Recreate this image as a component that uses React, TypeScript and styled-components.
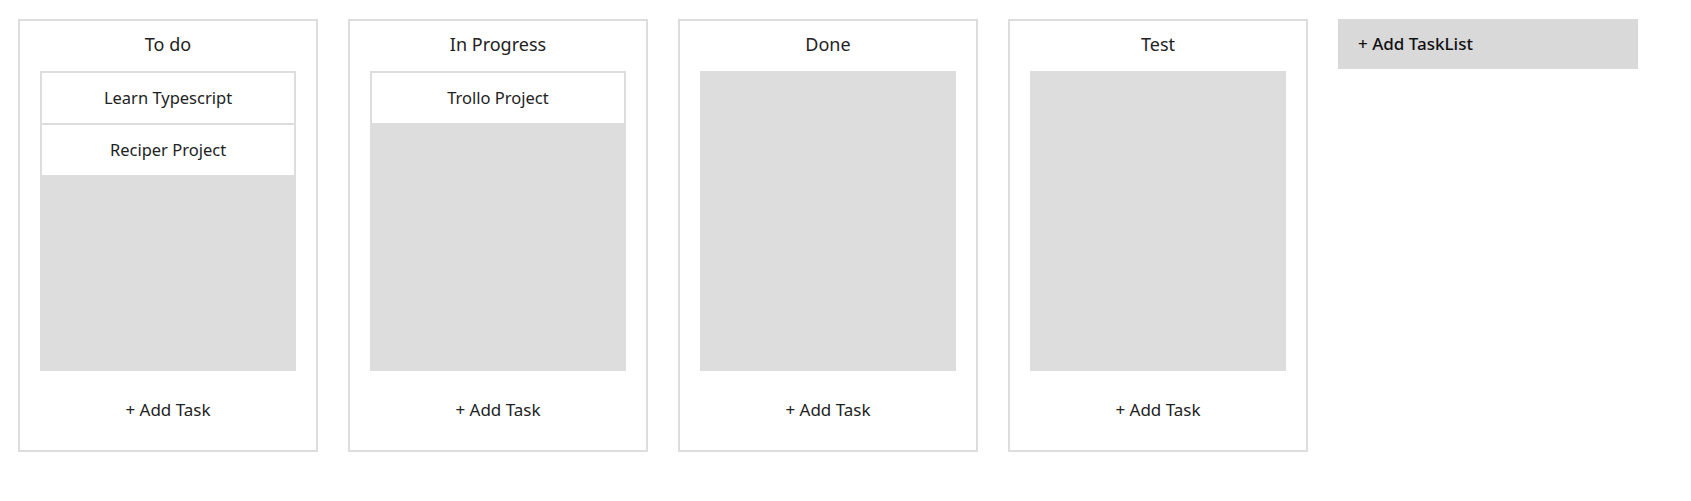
import React from "react";
import styled, { createGlobalStyle } from "styled-components";

const GlobalStyle = createGlobalStyle`
    body {
        margin: 0;
        background: #fff;
        font-family: "Noto Sans", "Noto Sans CJK KR", sans-serif;
        color: #222;
    }
`;

const Board = styled.div`
    display: flex;
    align-items: flex-start;
    gap: 30px;
    padding: 19px 18px;
`;

const Column = styled.div`
    width: 300px;
    box-sizing: border-box;
    border: 2px solid #dddddd;
    padding: 0 20px;
    display: flex;
    flex-direction: column;
`;

const ColumnTitle = styled.h2`
    margin: 0;
    height: 50px;
    padding-bottom: 4px;
    box-sizing: border-box;
    display: flex;
    align-items: center;
    justify-content: center;
    font-size: 18px;
    font-weight: 400;
`;

const TaskList = styled.div`
    height: 300px;
    box-sizing: border-box;
    border: 2px solid #dddddd;
    background: #dddddd;
    display: flex;
    flex-direction: column;
    gap: 2px;
`;

const Task = styled.div`
    height: 50px;
    flex-shrink: 0;
    padding-bottom: 2px;
    box-sizing: border-box;
    background: #fff;
    display: flex;
    align-items: center;
    justify-content: center;
    font-size: 16.5px;
`;

const AddTask = styled.div`
    height: 79px;
    padding-bottom: 2px;
    box-sizing: border-box;
    display: flex;
    align-items: center;
    justify-content: center;
    font-size: 17px;
    cursor: pointer;
`;

const AddList = styled.div`
    width: 300px;
    height: 50px;
    box-sizing: border-box;
    padding: 0 0 2px 20px;
    background: #d9d9d9;
    display: flex;
    align-items: center;
    font-size: 17px;
    font-weight: 500;
    color: #111;
    cursor: pointer;
`;

const columns: { title: string; tasks: string[] }[] = [
    { title: "To do", tasks: ["Learn Typescript", "Reciper Project"] },
    { title: "In Progress", tasks: ["Trollo Project"] },
    { title: "Done", tasks: [] },
    { title: "Test", tasks: [] },
];

export default function App() {
    return <>
        <GlobalStyle />
        <Board>
            {columns.map(col => (
                <Column key={col.title}>
                    <ColumnTitle>{col.title}</ColumnTitle>
                    <TaskList>
                        {col.tasks.map(t => <Task key={t}>{t}</Task>)}
                    </TaskList>
                    <AddTask>+ Add Task</AddTask>
                </Column>
            ))}
            <AddList>+ Add TaskList</AddList>
        </Board>
    </>;
}
